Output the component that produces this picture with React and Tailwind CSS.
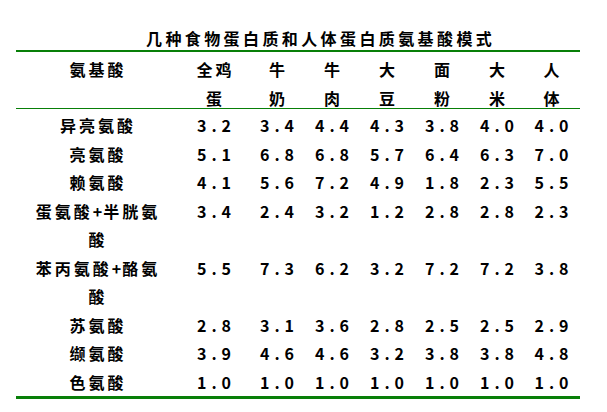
import React from "react";

const cols = "grid grid-cols-[164px_71px_55px_55px_55px_55px_55px_54px]";

const Plus = () => <span className="tracking-[0px] mr-[1px]">+</span>;

const rows = [
  [["异亮氨酸"], ["3.2", "3.4", "4.4", "4.3", "3.8", "4.0", "4.0"]],
  [["亮氨酸"], ["5.1", "6.8", "6.8", "5.7", "6.4", "6.3", "7.0"]],
  [["赖氨酸"], ["4.1", "5.6", "7.2", "4.9", "1.8", "2.3", "5.5"]],
  [[<>蛋氨酸<Plus />半胱氨</>, "酸"], ["3.4", "2.4", "3.2", "1.2", "2.8", "2.8", "2.3"]],
  [[<>苯丙氨酸<Plus />酪氨</>, "酸"], ["5.5", "7.3", "6.2", "3.2", "7.2", "7.2", "3.8"]],
  [["苏氨酸"], ["2.8", "3.1", "3.6", "2.8", "2.5", "2.5", "2.9"]],
  [["缬氨酸"], ["3.9", "4.6", "4.6", "3.2", "3.8", "3.8", "4.8"]],
  [["色氨酸"], ["1.0", "1.0", "1.0", "1.0", "1.0", "1.0", "1.0"]],
];

const heads = [
  ["全鸡", "蛋"],
  ["牛", "奶"],
  ["牛", "肉"],
  ["大", "豆"],
  ["面", "粉"],
  ["大", "米"],
  ["人", "体"],
];

export default function App() {
  return (
    <div
      className="w-[607px] h-[412px] bg-white text-black font-bold text-[16px]"
      style={{ fontFamily: '"Noto Sans CJK SC", "Noto Sans", sans-serif' }}
    >
      <div className="pt-[27px] pb-[1px] pl-[146px] leading-[22px] tracking-[3.4px] whitespace-nowrap">
        几种食物蛋白质和人体蛋白质氨基酸模式
      </div>
      <div className="ml-[16px] w-[564px] border-t-2 border-b-[3px] border-[#087f08]">
        <div className={`${cols} h-[57px] border-b border-[#087f08] leading-[28.5px] tracking-[3px]`}>
          <div className="pt-[3px] text-center">氨基酸</div>
          {heads.map((h, i) => (
            <div key={i} className="pt-[3px] text-center">
              <div>{h[0]}</div>
              <div>{h[1]}</div>
            </div>
          ))}
        </div>
        <div className="pt-[2px] leading-[28.5px]">
          {rows.map(([name, vals], r) => (
            <div key={r} className={cols}>
              <div className="text-center tracking-[3px] whitespace-nowrap">
                {name.map((n, k) => (
                  <div key={k}>{n}</div>
                ))}
              </div>
              {vals.map((v, k) => (
                <div key={k} className="text-center tracking-[5px] pl-[2px]">
                  {v}
                </div>
              ))}
            </div>
          ))}
        </div>
      </div>
    </div>
  );
}
